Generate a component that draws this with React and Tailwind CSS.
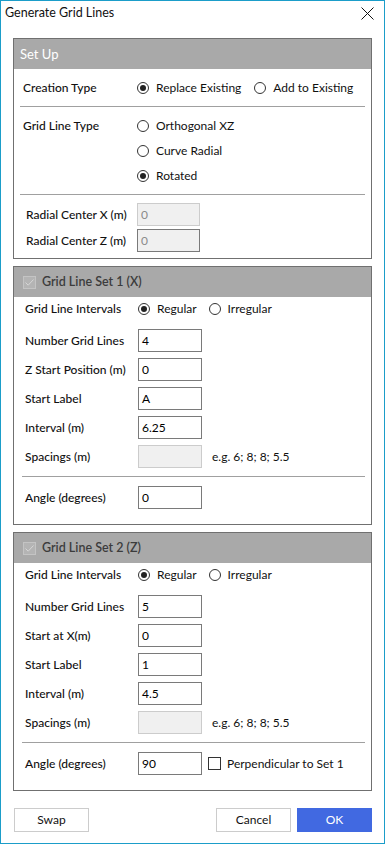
import React from 'react';

function Radio({ checked, label, className = '' }) {
  return (
    <div className={`flex items-center h-[20px] ${className}`}>
      <span className="w-[12px] h-[12px] rounded-full border border-[#333333] bg-white flex items-center justify-center shrink-0">
        {checked && <span className="w-[6px] h-[6px] rounded-full bg-[#222222]" />}
      </span>
      <span className="ml-[7px] text-[#111111]">{label}</span>
    </div>
  );
}

function Box({ value, disabled, dark, w = 'w-[64px]' }) {
  const border = disabled ? (dark ? 'border-[#7a7a7a]' : 'border-[#cccccc]') : 'border-[#7a7a7a]';
  return (
    <div className={`h-[23px] ${w} border ${border} flex items-center pl-[3px] shrink-0 ${disabled ? 'bg-[#f0f0f0] text-[#8a8a8a]' : 'bg-white text-black'}`}>
      {value}
    </div>
  );
}

function Field({ label, value, disabled, dark, extra, labelW = 'w-[113px]', w, className = '' }) {
  return (
    <div className={`flex items-center h-[23px] ${className}`}>
      <div className={`${labelW} shrink-0 font-medium text-[#111111]`}>{label}</div>
      <Box value={value} disabled={disabled} dark={dark} w={w} />
      {extra}
    </div>
  );
}

function Check({ checked, disabled }) {
  return (
    <span className={`w-[13px] h-[13px] border flex items-center justify-center shrink-0 ${disabled ? 'border-[#c4c4c4] bg-[#b4b4b4]' : 'border-[#333333] bg-white'}`}>
      {checked && (
        <svg width="11" height="11" viewBox="0 0 11 11">
          <path d="M1.5 5.5 L4.2 8.2 L9.5 2.5" fill="none" stroke="#d6d6d6" strokeWidth="1" />
        </svg>
      )}
    </span>
  );
}

function SetPanel({ title, values, startLabel, perpendicular, className = '' }) {
  return (
    <div className={`border border-[#707070] ${className}`}>
      <div className="h-[30px] bg-[#a9a9a9] flex items-center pl-[9px]">
        <Check checked disabled />
        <span className="ml-[6px] font-semibold text-[12.5px] text-[#3c3c3c]">{title}</span>
      </div>
      <div className="pl-[11px] pb-[15px]">
        <div className="flex items-center h-[20px] mt-[2px]">
          <div className="w-[113px] shrink-0 font-medium text-[#111111]">Grid Line Intervals</div>
          <Radio checked label="Regular" />
          <Radio label="Irregular" className="ml-[12px]" />
        </div>
        <Field label="Number Grid Lines" value={values[0]} className="mt-[10px]" />
        <Field label={startLabel} value={values[1]} className="mt-[6px]" />
        <Field label="Start Label" value={values[2]} className="mt-[6px]" />
        <Field label="Interval (m)" value={values[3]} className="mt-[6px]" />
        <Field
          label="Spacings (m)"
          value=""
          disabled
          className="mt-[6px]"
          extra={<span className="ml-[10px] text-[#111111]">e.g. 6; 8; 8; 5.5</span>}
        />
        <div className="h-px bg-[#a0a0a0] mt-[8px] ml-[-3px] mr-[6px]" />
        <Field
          label="Angle (degrees)"
          value={values[4]}
          className="mt-[9px]"
          extra={perpendicular && (
            <div className="flex items-center ml-[6px]">
              <Check />
              <span className="ml-[6px] text-[#111111]">Perpendicular to Set 1</span>
            </div>
          )}
        />
      </div>
    </div>
  );
}

export default function App() {
  return (
    <div className="w-[385px] h-[844px] border border-[#1b9dc9] bg-white flex flex-col font-['Lato',sans-serif] text-[12px] leading-none text-black">
      {/* Title bar */}
      <div className="h-[25px] flex items-center justify-between pl-[4px] pr-[10px] shrink-0">
        <span className="text-[#111111] text-[12.5px]">Generate Grid Lines</span>
        <svg width="13" height="13" viewBox="0 0 13 13">
          <path d="M0.5 0.5 L12.5 12.5 M12.5 0.5 L0.5 12.5" stroke="#111111" strokeWidth="1" />
        </svg>
      </div>

      <div className="px-[12px] flex flex-col">
        {/* Set Up */}
        <div className="border border-[#707070] mt-[12px]">
          <div className="h-[30px] bg-[#a9a9a9] flex items-center pl-[6px]">
            <span className="text-white text-[13px]">Set Up</span>
          </div>
          <div className="pb-[6px]">
            <div className="flex items-center h-[20px] mt-[9px] pl-[9px]">
              <div className="w-[114px] shrink-0 font-medium text-[#111111]">Creation Type</div>
              <Radio checked label="Replace Existing" />
              <Radio label="Add to Existing" className="ml-[13px]" />
            </div>
            <div className="h-px bg-[#a0a0a0] mt-[8px] mx-[6px]" />
            <div className="flex pl-[9px] mt-[9px]">
              <div className="w-[114px] shrink-0 font-medium text-[#111111] h-[20px] flex items-center">Grid Line Type</div>
              <div className="flex flex-col gap-[5px]">
                <Radio label="Orthogonal XZ" />
                <Radio label="Curve Radial" />
                <Radio checked label="Rotated" />
              </div>
            </div>
            <div className="h-px bg-[#a0a0a0] mt-[8px] mx-[6px]" />
            <div className="pl-[12px]">
              <Field label="Radial Center X (m)" value="0" disabled labelW="w-[111px]" w="w-[63px]" className="mt-[8px]" />
              <Field label="Radial Center Z (m)" value="0" disabled dark labelW="w-[111px]" w="w-[63px]" className="mt-[3px]" />
            </div>
          </div>
        </div>

        <SetPanel
          title="Grid Line Set 1 (X)"
          values={['4', '0', 'A', '6.25', '0']}
          startLabel="Z Start Position (m)"
          className="mt-[7px]"
        />
        <SetPanel
          title="Grid Line Set 2 (Z)"
          values={['5', '0', '1', '4.5', '90']}
          startLabel="Start at X(m)"
          perpendicular
          className="mt-[7px]"
        />
      </div>

      {/* Footer buttons */}
      <div className="flex items-center mt-[17px] pl-[13px] pr-[12px]">
        <button className="w-[75px] h-[24px] border border-[#cccccc] bg-white text-[#111111]">Swap</button>
        <div className="flex-1" />
        <button className="w-[75px] h-[24px] border border-[#cccccc] bg-white text-[#111111]">Cancel</button>
        <button className="w-[75px] h-[24px] ml-[6px] bg-[#4169e1] text-white">OK</button>
      </div>
    </div>
  );
}
